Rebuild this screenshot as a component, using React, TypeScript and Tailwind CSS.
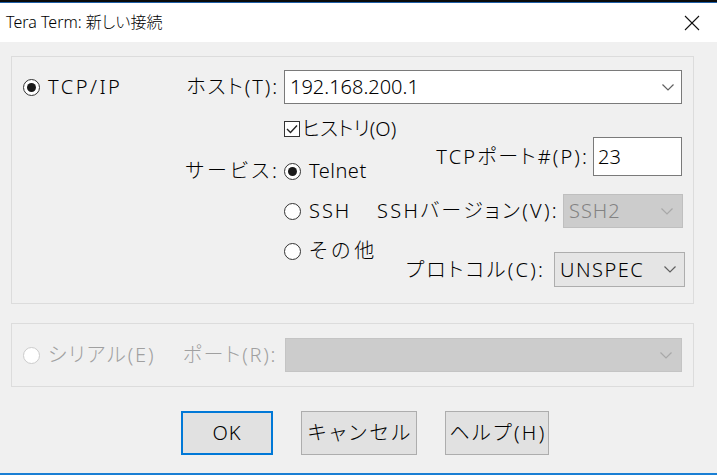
import React from "react";

const FONT = "[font-family:'Noto_Sans','Noto_Sans_CJK_JP',sans-serif] [font-feature-settings:'palt']";

function Chevron({ color = "#606060" }: { color?: string }) {
  return (
    <svg width="12" height="7" viewBox="0 0 12 7" className="shrink-0">
      <polyline points="0.5,0.5 6,6 11.5,0.5" fill="none" stroke={color} strokeWidth="1.2" />
    </svg>
  );
}

function Radio({ checked = false, disabled = false }: { checked?: boolean; disabled?: boolean }) {
  return (
    <span
      className={
        "flex items-center justify-center w-[17px] h-[17px] rounded-full bg-white border shrink-0 " +
        (disabled ? "border-[#cccccc]" : "border-[#333333]")
      }
    >
      {checked && <span className="w-[9px] h-[9px] rounded-full bg-[#1a1a1a]" />}
    </span>
  );
}

function Checkbox() {
  return (
    <span className="flex items-center justify-center w-[16px] h-[16px] bg-white border border-[#333333] shrink-0">
      <svg width="12" height="10" viewBox="0 0 12 10">
        <polyline points="1,5 4.5,8.5 11,1.5" fill="none" stroke="#222" strokeWidth="1.4" />
      </svg>
    </span>
  );
}

export default function App() {
  return (
    <div className={"w-[717px] h-[475px] bg-[#f0f0f0] flex flex-col overflow-hidden text-black font-light whitespace-nowrap " + FONT}>
      <div className="h-[2px] bg-[#0a0a0a]" />
      <div className="h-[1px] bg-[#1e5fa8]" />
      {/* title bar */}
      <div className="h-[39px] bg-white flex items-center justify-between pl-[6px] pr-[16px]">
        <span className="text-[16px] leading-none pb-[2px]">Tera Term: 新しい接続</span>
        <svg width="16" height="16" viewBox="0 0 16 16" className="mr-[1px]">
          <line x1="1" y1="1" x2="15" y2="15" stroke="#111" strokeWidth="1.1" />
          <line x1="15" y1="1" x2="1" y2="15" stroke="#111" strokeWidth="1.1" />
        </svg>
      </div>

      {/* body */}
      <div className="flex-1 flex flex-col pl-[11px] pt-[14px]">
        {/* group 1 */}
        <div className="w-[683px] h-[248px] border border-[#dcdcdc] flex text-[20px] leading-none">
          <div className="w-[166px] pl-[11px] pt-[13px]">
            <div className="h-[34px] flex items-center gap-[8px]">
              <Radio checked />
              <span className="tracking-[2.5px]">TCP/IP</span>
            </div>
          </div>
          <div className="flex flex-col">
            {/* host row */}
            <div className="mt-[13px] flex items-center">
              <div className="w-[106px] pr-[5px] text-right tracking-[1.9px]">ホスト(T):</div>
              <div className="w-[398px] h-[34px] bg-white border border-[#7a7a7a] flex items-center justify-between pl-[5px] pr-[7px]">
                <span>192.168.200.1</span>
                <Chevron />
              </div>
            </div>
            {/* history */}
            <div className="mt-[17px] h-[16px] flex items-center ml-[106px] gap-[2px]">
              <Checkbox />
              <span>ヒストリ(O)</span>
            </div>
            {/* services */}
            <div className="flex">
              <div className="w-[106px] pr-[4px] text-right pt-[24px] tracking-[3px]">サービス:</div>
              <div className="w-[88px] pt-[14px] flex flex-col">
                <div className="h-[40px] flex items-center gap-[8px]">
                  <Radio checked />
                  <span className="tracking-[0.5px]">Telnet</span>
                </div>
                <div className="h-[40px] flex items-center gap-[8px]">
                  <Radio />
                  <span className="tracking-[2px]">SSH</span>
                </div>
                <div className="h-[40px] flex items-center gap-[8px]">
                  <Radio />
                  <span className="tracking-[4px]">その他</span>
                </div>
              </div>
              <div className="w-[313px] flex flex-col">
                <div className="h-[39px] flex items-center justify-end pr-[3px] gap-[4px]">
                  <span className="tracking-[2.1px]">TCPポート#(P):</span>
                  <div className="w-[89px] h-[39px] bg-white border border-[#7a7a7a] flex items-center pl-[4px]">23</div>
                </div>
                <div className="mt-[18px] h-[34px] flex items-center justify-end pr-[2px] gap-[4px]">
                  <span className="tracking-[2.3px]">SSHバージョン(V):</span>
                  <div className="w-[120px] h-[34px] bg-[#cccccc] border border-[#bfbfbf] flex items-center justify-between pl-[5px] pr-[9px] text-[#838383]">
                    <span className="tracking-[1px]">SSH2</span>
                    <Chevron color="#a8a8a8" />
                  </div>
                </div>
                <div className="mt-[24px] h-[35px] flex items-center justify-end gap-[9px]">
                  <span className="tracking-[2.2px]">プロトコル(C):</span>
                  <div className="w-[131px] h-[35px] bg-[#e5e5e5] border border-[#adadad] flex items-center justify-between pl-[5px] pr-[8px]">
                    <span className="tracking-[1.5px]">UNSPEC</span>
                    <Chevron />
                  </div>
                </div>
              </div>
            </div>
          </div>
        </div>

        {/* group 2 */}
        <div className="mt-[19px] w-[683px] h-[64px] border border-[#dcdcdc] flex items-center text-[20px] leading-none text-[#a0a0a0]">
          <div className="w-[166px] pl-[11px] flex items-center gap-[8px]">
            <Radio disabled />
            <span className="tracking-[1.9px]">シリアル(E)</span>
          </div>
          <div className="w-[107px] pr-[8px] text-right tracking-[1.7px]">ポート(R):</div>
          <div className="w-[397px] h-[34px] bg-[#cccccc] border border-[#c4c4c4] flex items-center justify-end pr-[9px]">
            <Chevron color="#a8a8a8" />
          </div>
        </div>

        {/* buttons */}
        <div className="mt-[24px] ml-[170px] flex gap-[28px] text-[20px] leading-none">
          <div className="w-[92px] h-[44px] bg-[#e1e1e1] border-2 border-[#0078d7] flex items-center justify-center tracking-[1px]">OK</div>
          <div className="w-[116px] h-[44px] bg-[#e1e1e1] border border-[#adadad] flex items-center justify-center tracking-[3px] pl-[3px]">キャンセル</div>
          <div className="w-[104px] h-[44px] bg-[#e1e1e1] border border-[#adadad] flex items-center justify-center tracking-[2.4px] pl-[2px]">ヘルプ(H)</div>
        </div>

        <div className="mt-auto -ml-[11px] h-[2px] bg-[#1a7fd4]" />
      </div>
    </div>
  );
}
